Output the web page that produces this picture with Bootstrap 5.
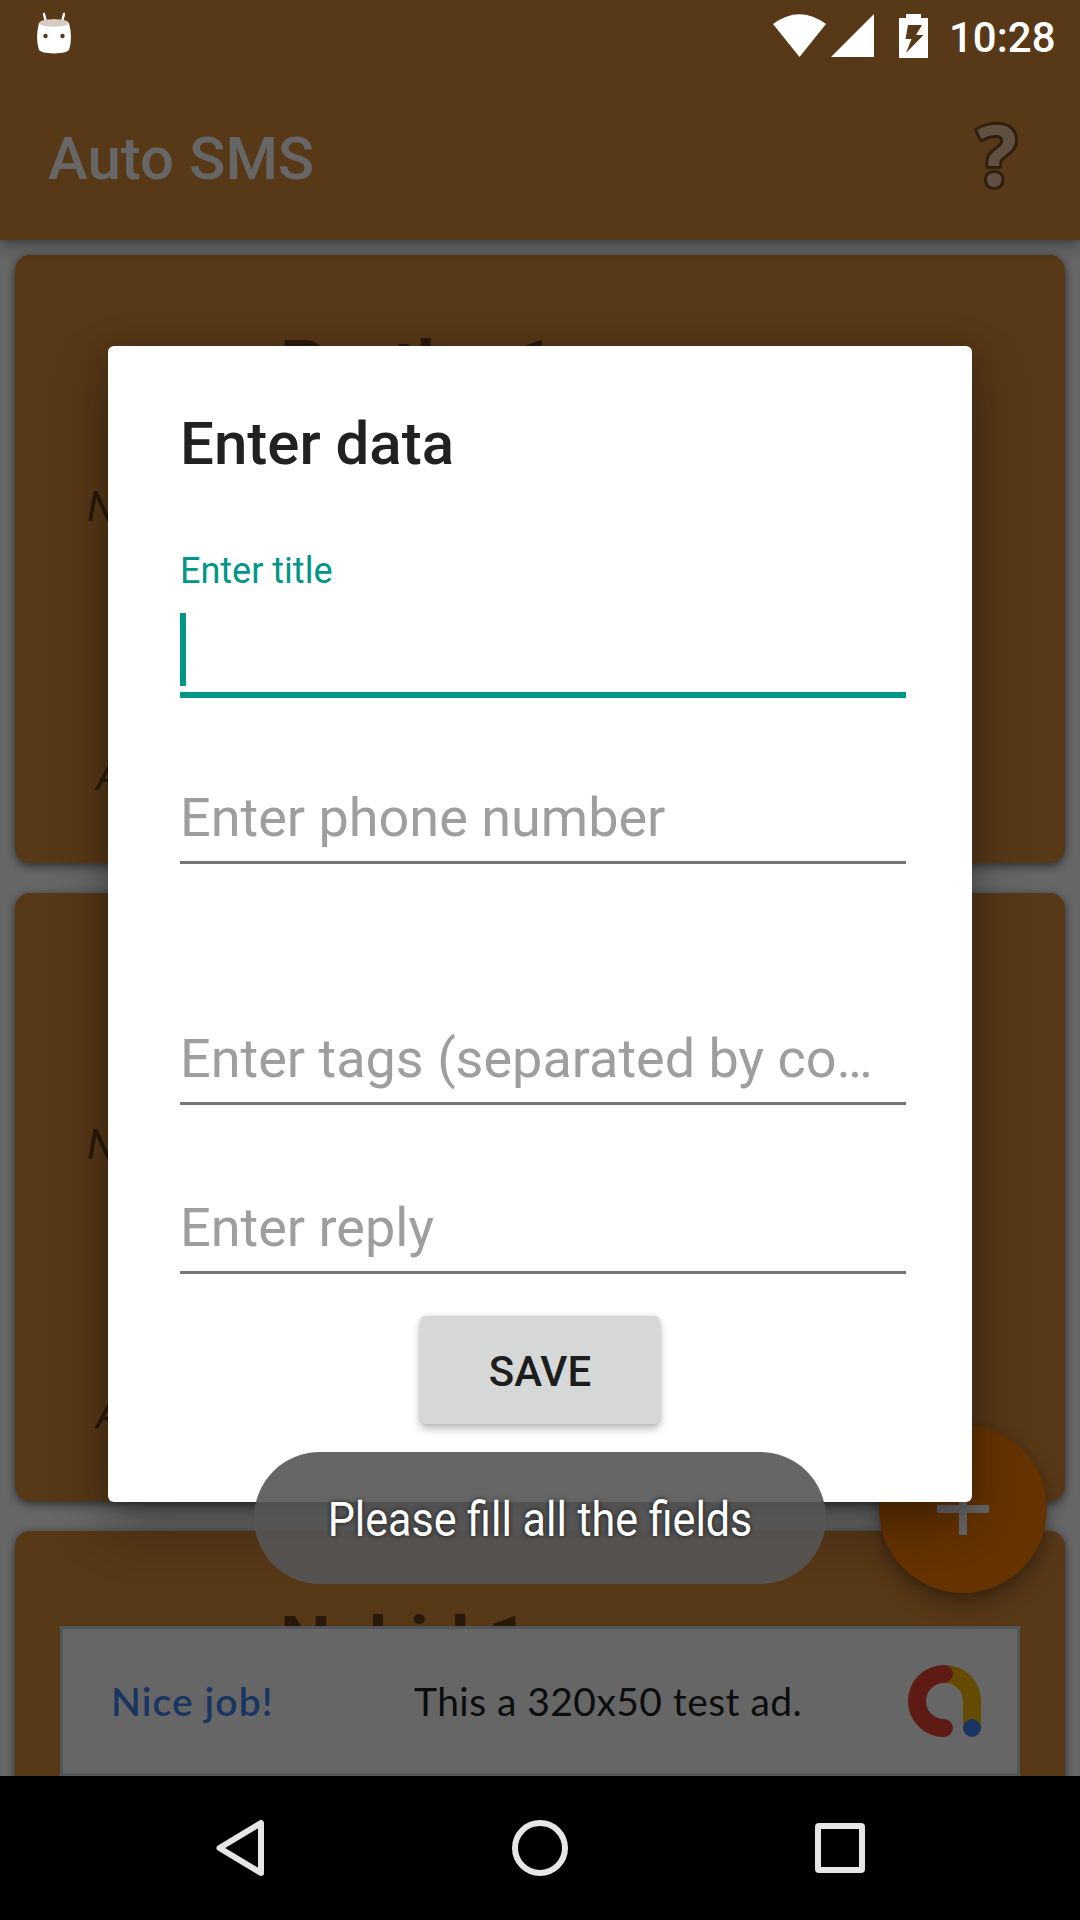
<!DOCTYPE html>
<html lang="en">
<head>
<meta charset="utf-8">
<meta name="viewport" content="width=device-width, initial-scale=1">
<title>Auto SMS</title>
<link rel="stylesheet" href="https://cdn.jsdelivr.net/npm/bootstrap@5.3.0/dist/css/bootstrap.min.css">
<style>
  body { font-family: Roboto, "Noto Sans", sans-serif; width: 1080px; height: 1920px; line-height: 1; background: #000; }
  .phone { width: 1080px; height: 1920px; }
  .app-view { height: 1776px; background: #fff; }
  .app-head { height: 240px; padding: 77px 46px 0 48px; background: #da8c3a; box-shadow: 0 6px 14px rgba(0,0,0,.32), 0 0 6px rgba(0,0,0,.2); z-index: 2; }
  .app-name { font-size: 60px; font-weight: 500; color: #fff; }
  .rule-list { padding: 15px 15px 0; gap: 30px; }
  .rule-item { height: 608px; flex: none; border: 0; border-radius: 15px; background: #da8c3a; box-shadow: 0 4px 10px rgba(0,0,0,.4), 0 0 8px rgba(0,0,0,.2); color: rgba(0,0,0,.54); }
  .rule-name { font-size: 72px; font-weight: 700; margin: 71px 0 0 265px; line-height: 84px; }
  .rule-msg, .rule-reply { font-size: 42px; font-style: italic; line-height: 50px; }
  .rule-msg { margin: 72px 0 0 72px; }
  .rule-reply { margin: 219px 0 0 81px; }
  .add-btn { left: 879px; top: 1425px; width: 168px; height: 168px; background: #ff8000; box-shadow: 0 10px 22px rgba(0,0,0,.3), 0 2px 8px rgba(0,0,0,.15); }
  .ad-box { left: 60px; top: 1626px; width: 960px; height: 150px; border: 3px solid #ccd8de; background: #fff; padding: 0 34px 0 48px; font-family: Lato, Inter, sans-serif; font-size: 39px; }
  .ad-lead { color: #4285f4; font-weight: 600; width: 303px; letter-spacing: 1.100px; }
  .ad-copy { color: #202124; flex: 1; letter-spacing: .45px; }
  .scrim { background: rgba(0,0,0,.6); z-index: 5; }
  .status-row { height: 72px; z-index: 6; color: #fff; }
  .clock { font-size: 42px; font-weight: 500; }
  .dialog-box { left: 108px; top: 346px; width: 864px; height: 1156px; border-radius: 6px; background: #fff; z-index: 7; padding: 63px 66px 0 72px; box-shadow: 0 24px 56px rgba(0,0,0,.28), 0 6px 24px rgba(0,0,0,.18); }
  .dialog-title { font-size: 60px; font-weight: 500; line-height: 70px; color: #212121; }
  .float-label { font-size: 36px; line-height: 42px; color: #009688; margin-top: 71px; }
  .entry { border-bottom: 3px solid #757575; font-size: 54px; line-height: 64px; color: #9e9e9e; white-space: nowrap; }
  .entry-active { height: 106px; border-bottom: 6px solid #009688; }
  .caret { width: 6px; height: 73px; margin-top: 21px; background: #009688; }
  .save-btn { width: 240px; height: 108px; margin: 42px 0 0 240px; border: 0; border-radius: 6px; background: #d6d7d7; color: #1c1d1d; font-size: 42px; font-weight: 500; box-shadow: 0 5px 8px rgba(0,0,0,.25), 0 0 4px rgba(0,0,0,.12); }
  .toast-pill { left: 254px; top: 1452px; width: 572px; height: 132px; border-radius: 66px; background: rgba(85,85,85,.9); z-index: 8; color: #fff; font-size: 48px; text-shadow: 0 0 6px rgba(0,0,0,.75); }
  .toast-copy { transform: scaleX(.896); white-space: nowrap; }
  .nav-row { height: 144px; }
</style>
<script src="https://cdn.jsdelivr.net/npm/bootstrap@5.3.0/dist/js/bootstrap.bundle.min.js"></script>
</head>
<body class="m-0 overflow-hidden">
<div class="phone position-relative overflow-hidden d-flex flex-column">
  <div class="app-view position-relative overflow-hidden d-flex flex-column">
    <header class="app-head position-relative d-flex align-items-center justify-content-between flex-shrink-0">
      <span class="app-name">Auto SMS</span>
      <svg width="70" height="120" viewBox="0 0 70 120"><text x="13" y="87" font-family="Open Sans" font-weight="700" font-size="84" fill="#edc8a2" stroke="#734e23" stroke-width="6" stroke-linejoin="round" paint-order="stroke">?</text></svg>
    </header>
    <main class="rule-list d-flex flex-column">
      <article class="card rule-item"><div class="rule-name">Partha 1</div><div class="rule-msg">Number</div><div class="rule-reply">Auto reply</div></article>
      <article class="card rule-item"><div class="rule-name">&nbsp;</div><div class="rule-msg">Number</div><div class="rule-reply">Auto reply</div></article>
      <article class="card rule-item"><div class="rule-name">Nahid 1</div></article>
    </main>
    <div class="add-btn position-absolute rounded-circle d-flex align-items-center justify-content-center">
      <svg width="52" height="52" viewBox="0 0 52 52"><path d="M0 26H52M26 0V52" stroke="#fff" stroke-width="8"/></svg>
    </div>
    <div class="ad-box position-absolute d-flex align-items-center">
      <span class="ad-lead">Nice job!</span>
      <span class="ad-copy">This a 320x50 test ad.</span>
      <svg width="74" height="74" viewBox="0 0 74 74" fill="none" stroke-width="18" overflow="visible"><path d="M36 10A27 27 0 0 1 63 37V64" stroke="#fbbc04"/><path d="M35 10A27 27 0 0 0 35 64" stroke="#ea4335" stroke-linecap="round"/><circle cx="63" cy="64" r="9" fill="#4285f4"/></svg>
    </div>
    <div class="scrim position-absolute top-0 start-0 w-100 h-100"></div>
  </div>

  <div class="status-row position-absolute top-0 start-0 w-100 d-flex align-items-center">
    <svg width="1080" height="72" viewBox="0 0 1080 72" fill="#fff">
      <path d="M44 14l2 8M64 14l-2 8" stroke="#fff" stroke-width="2.4" stroke-linecap="round"/>
      <path d="M39 23Q54 16 69 23Q73 38 69 50Q67 53 54 53.500Q41 53 39 50Q35 38 39 23Z"/>
      <ellipse cx="54" cy="23" rx="14.800" ry="3.800" fill="#d5cbc2"/>
      <circle cx="45.500" cy="36" r="2.200" fill="#573817"/><circle cx="62.500" cy="36" r="2.200" fill="#573817"/>
      <path d="M799.500 57L773 24Q799.500 4.500 826 24Z"/><path d="M831 57H874V14Z"/>
      <path d="M899 18H906V14H921V18H928V58H899Z"/><path d="M908 25H922L916 35H923.500L906 53L911.500 39H905.500Z" fill="#573817"/>
      <text class="clock" x="949" y="52">10:28</text>
    </svg>
  </div>

  <section class="dialog-box position-absolute d-flex flex-column">
    <div class="dialog-title">Enter data</div>
    <div class="float-label">Enter title</div>
    <div class="entry entry-active"><div class="caret"></div></div>
    <div class="entry" style="margin-top:88px;padding-bottom:11px">Enter phone number</div>
    <div class="entry" style="margin-top:163px;padding-bottom:11px">Enter tags (separated by co…</div>
    <div class="entry" style="margin-top:91px;padding-bottom:11px">Enter reply</div>
    <button class="save-btn px-0 pb-0 pt-1">SAVE</button>
  </section>

  <div class="toast-pill position-absolute d-flex align-items-center justify-content-center pt-1"><span class="toast-copy">Please fill all the fields</span></div>

  <nav class="nav-row">
    <svg width="1080" height="144" viewBox="0 0 1080 144" fill="none" stroke="#e6e6e6" stroke-width="6" stroke-linejoin="round">
      <path d="M219.500 72L261 47V97Z"/><circle cx="540" cy="72" r="25"/><rect x="818" y="50" width="44" height="44" rx="1"/>
    </svg>
  </nav>
</div>
</body>
</html>
